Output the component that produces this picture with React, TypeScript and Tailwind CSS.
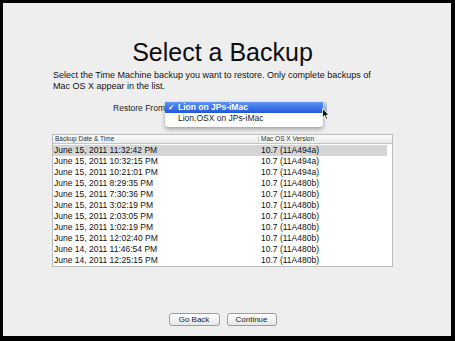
import React from 'react';

const backups = [
  ['June 15, 2011 11:32:42 PM', '10.7 (11A494a)'],
  ['June 15, 2011 10:32:15 PM', '10.7 (11A494a)'],
  ['June 15, 2011 10:21:01 PM', '10.7 (11A494a)'],
  ['June 15, 2011 8:29:35 PM', '10.7 (11A480b)'],
  ['June 15, 2011 7:30:36 PM', '10.7 (11A480b)'],
  ['June 15, 2011 3:02:19 PM', '10.7 (11A480b)'],
  ['June 15, 2011 2:03:05 PM', '10.7 (11A480b)'],
  ['June 15, 2011 1:02:19 PM', '10.7 (11A480b)'],
  ['June 15, 2011 12:02:40 PM', '10.7 (11A480b)'],
  ['June 14, 2011 11:46:54 PM', '10.7 (11A480b)'],
  ['June 14, 2011 12:25:15 PM', '10.7 (11A480b)'],
];

function Cursor() {
  return (
    <svg width="8" height="12" viewBox="0 0 8 12" className="absolute left-[157px] top-[6px]">
      <path d="M0.5 0.5 L0.5 9.5 L2.6 7.6 L4.2 11.2 L5.6 10.6 L4.1 7.1 L7 7.1 Z" fill="#111" stroke="#fff" strokeWidth="0.8" />
    </svg>
  );
}

export default function App() {
  return (
    <div className="w-[455px] h-[341px] bg-black pt-[3px] pl-[3px] pr-[4px] pb-[5px]">
      <div
        className="h-full bg-[#eeeeee] text-[#111]"
        style={{ fontFamily: '"Liberation Sans", Arial, sans-serif' }}
      >
        <div className="ml-[49px] w-[341px] flex flex-col">
          <h1 className="mt-[34px] text-center text-[25px] leading-[30px] text-[#0d0d0d]">Select a Backup</h1>

          <p className="mt-[3px] ml-[1px] text-[9px] leading-[11px]">
            Select the Time Machine backup you want to restore. Only complete backups of
            <br />
            Mac OS X appear in the list.
          </p>

          {/* restore from popup, shown open */}
          <div className="mt-[10px] flex items-start">
            <span className="w-[113px] pt-[1px] text-right text-[8.5px] leading-[10px] text-[#222]">Restore From</span>
            <div className="relative">
              <div className="w-[158px] h-[25px] bg-white shadow-[0_2px_4px_rgba(0,0,0,0.35)] rounded-b-[3px] pb-[3px]">
                <div className="h-[11px] flex items-center gap-[3px] pl-[3px] bg-gradient-to-b from-[#5f92f2] to-[#1f57db] text-white text-[8.5px] font-bold">
                  <span className="text-[8px]">✓</span>
                  <span>Lion on JPs-iMac</span>
                </div>
                <div className="h-[11px] flex items-center pl-[13px] text-[8.5px] text-[#222]">Lion.OSX on JPs-iMac</div>
              </div>
              <div className="absolute left-[158px] top-0 w-[4px] h-[11px] rounded-r-[2px] bg-gradient-to-b from-[#c9d6ee] to-[#8fa5cf]" />
              <Cursor />
            </div>
          </div>

          {/* backup list */}
          <div className="mt-[7px] h-[133px] bg-white border border-[#bcbcbc]">
            <div className="h-[9px] flex items-center bg-gradient-to-b from-[#fbfbfb] to-[#ececec] border-b border-[#c4c4c4] text-[6.5px] text-[#333]">
              <span className="w-[206px] pl-[2px] border-r border-[#cfcfcf] leading-[8px]">Backup Date &amp; Time</span>
              <span className="pl-[2px] leading-[8px]">Mac OS X Version</span>
            </div>
            <div className="mr-[5px] pt-[1px]">
              {backups.map(([date, version], i) => (
                <div
                  key={date}
                  className={`h-[11px] flex items-center text-[8.5px] ${i === 0 ? 'bg-[#d5d5d5]' : ''}`}
                >
                  <span className="w-[207px] pl-[1px]">{date}</span>
                  <span className="pl-[1px]">{version}</span>
                </div>
              ))}
            </div>
          </div>

          <div className="mt-[46px] flex justify-center gap-[7px]">
            <button className="w-[51px] h-[13px] rounded-[3px] border border-[#9d9d9d] bg-gradient-to-b from-white to-[#e6e6e6] text-[8px] leading-[11px] text-[#222]">
              Go Back
            </button>
            <button className="w-[50px] h-[13px] rounded-[3px] border border-[#9d9d9d] bg-gradient-to-b from-white to-[#e6e6e6] text-[8px] leading-[11px] text-[#222]">
              Continue
            </button>
          </div>
        </div>
      </div>
    </div>
  );
}
